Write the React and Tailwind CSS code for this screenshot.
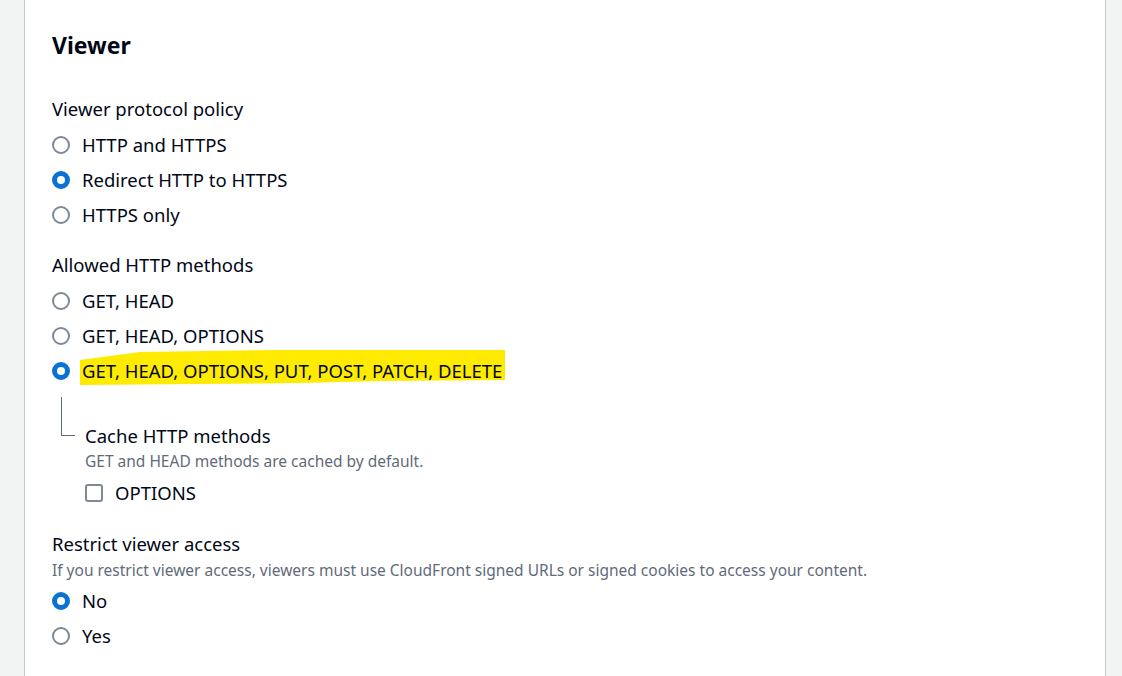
import React from "react";

function Radio({ checked, children, highlight }) {
  return (
    <div className="flex items-center h-[35px]">
      {checked ? (
        <span className="w-[18px] h-[18px] rounded-full border-[5px] border-[#0972d3] bg-white shrink-0" />
      ) : (
        <span className="w-[18px] h-[18px] rounded-full border-2 border-[#7d8998] bg-white shrink-0" />
      )}
      {highlight ? (
        <span className="relative ml-[12px]">
          <svg className="absolute left-[-2px] top-[-9px]" width="428" height="42" viewBox="0 0 428 42">
            <polygon points="0,10 30,6 60,2 200,0 425,-1 425,30 300,31 220,33 0,35" fill="#ffeb00" />
          </svg>
          <span className="relative">{children}</span>
        </span>
      ) : (
        <span className="ml-[12px]">{children}</span>
      )}
    </div>
  );
}

export default function App() {
  return (
    <div
      className="w-[1122px] h-[676px] bg-[#f2f3f3] overflow-hidden text-[#000716]"
      style={{ fontFamily: '"Noto Sans", "Open Sans", sans-serif' }}
    >
      <div className="ml-[24px] w-[1082px] h-full bg-white border-x border-[#c6c6cd] pl-[27px] pt-[29px] text-[18.5px] leading-[24px]">
        <h2 className="text-[23px] font-bold leading-[32px]">Viewer</h2>

        <div className="mt-[36px]">Viewer protocol policy</div>
        <div className="mt-[6px]">
          <Radio>HTTP and HTTPS</Radio>
          <Radio checked>Redirect HTTP to HTTPS</Radio>
          <Radio>HTTPS only</Radio>
        </div>

        <div className="mt-[21px]">Allowed HTTP methods</div>
        <div className="mt-[6px]">
          <Radio>GET, HEAD</Radio>
          <Radio>GET, HEAD, OPTIONS</Radio>
          <Radio checked highlight>GET, HEAD, OPTIONS, PUT, POST, PATCH, DELETE</Radio>
        </div>

        <div className="flex">
          <div className="ml-[9px] mt-[9px] w-[14px] h-[39px] border-l border-b border-[#5f6b7a] shrink-0" />
          <div className="ml-[10px] mt-[36px]">
            <div>Cache HTTP methods</div>
            <div className="text-[15.5px] leading-[20px] text-[#5f6b7a] mt-[3px]">GET and HEAD methods are cached by default.</div>
            <div className="flex items-center h-[35px] mt-[4px]">
              <span className="w-[18px] h-[18px] rounded-[3px] border-2 border-[#7d8998] bg-white shrink-0" />
              <span className="ml-[12px]">OPTIONS</span>
            </div>
          </div>
        </div>

        <div className="mt-[22px]">Restrict viewer access</div>
        <div className="text-[15.5px] leading-[20px] text-[#5f6b7a] mt-[4px]">
          If you restrict viewer access, viewers must use CloudFront signed URLs or signed cookies to access your content.
        </div>
        <div className="mt-[3px]">
          <Radio checked>No</Radio>
          <Radio>Yes</Radio>
        </div>
      </div>
    </div>
  );
}
